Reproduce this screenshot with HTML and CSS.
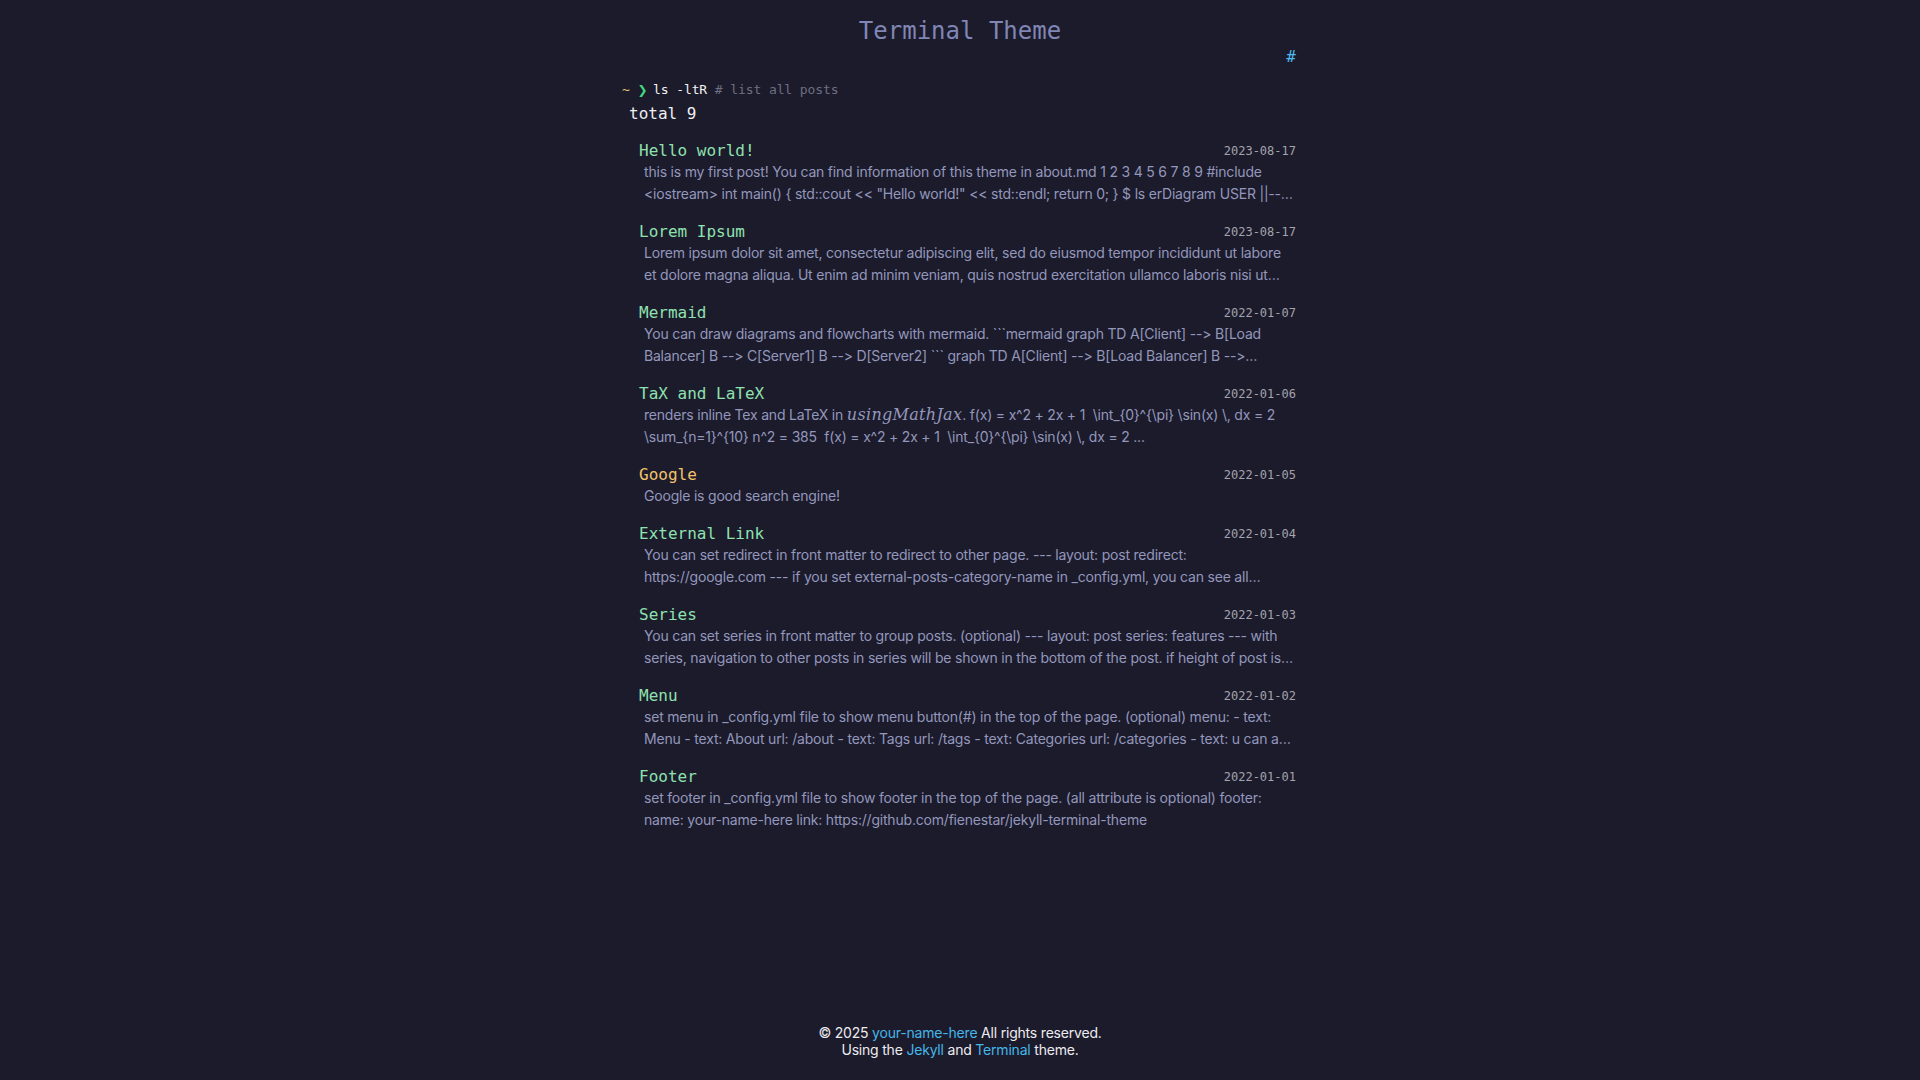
FILE: index.html
```html
<!DOCTYPE html>
<html lang="en">
<head>
<meta charset="utf-8">
<title>Terminal Theme</title>
<link rel="stylesheet" href="styles.css">
</head>
<body>
<div class="page">
  <header class="site-header">
    <h1 class="site-title">Terminal Theme</h1>
    <nav class="menu"><a class="menu-btn" href="#">#</a></nav>
  </header>
  <main class="content">
    <div class="prompt"><span class="p-home">~</span> <span class="p-arrow">❯</span> <span class="p-cmd">ls -ltR</span> <span class="p-comment"># list all posts</span></div>
    <div class="total">total 9</div>
    <ul class="posts">
      <li class="post">
        <div class="post-head"><a class="post-title" href="#">Hello world!</a><span class="post-date">2023-08-17</span></div>
        <p class="post-summary">this is my first post! You can find information of this theme in about.md 1 2 3 4 5 6 7 8 9 #include &lt;iostream&gt; int main() { std::cout &lt;&lt; "Hello world!" &lt;&lt; std::endl; return 0; } $ ls erDiagram USER ||--o{ ORDER : places ORDER ||--|{ LINE-ITEM : contains</p>
      </li>
      <li class="post">
        <div class="post-head"><a class="post-title" href="#">Lorem Ipsum</a><span class="post-date">2023-08-17</span></div>
        <p class="post-summary">Lorem ipsum dolor sit amet, consectetur adipiscing elit, sed do eiusmod tempor incididunt ut labore et dolore magna aliqua. Ut enim ad minim veniam, quis nostrud exercitation ullamco laboris nisi ut aliquip ex ea commodo consequat.</p>
      </li>
      <li class="post">
        <div class="post-head"><a class="post-title" href="#">Mermaid</a><span class="post-date">2022-01-07</span></div>
        <p class="post-summary">You can draw diagrams and flowcharts with mermaid. ```mermaid graph TD A[Client] --&gt; B[Load Balancer] B --&gt; C[Server1] B --&gt; D[Server2] ``` graph TD A[Client] --&gt; B[Load Balancer] B --&gt; C[Server1] B --&gt; D[Server2]</p>
      </li>
      <li class="post">
        <div class="post-head"><a class="post-title" href="#">TaX and LaTeX</a><span class="post-date">2022-01-06</span></div>
        <p class="post-summary">renders inline Tex and LaTeX in <span class="math">usingMathJax</span>. f(x) = x^2 + 2x + 1 &nbsp;\int_{0}^{\pi} \sin(x) \, dx = 2 \sum_{n=1}^{10} n^2 = 385 &nbsp;f(x) = x^2 + 2x + 1 &nbsp;\int_{0}^{\pi} \sin(x) \, dx = 2 ...</p>
      </li>
      <li class="post">
        <div class="post-head"><a class="post-title external" href="#">Google</a><span class="post-date">2022-01-05</span></div>
        <p class="post-summary">Google is good search engine!</p>
      </li>
      <li class="post">
        <div class="post-head"><a class="post-title" href="#">External Link</a><span class="post-date">2022-01-04</span></div>
        <p class="post-summary">You can set redirect in front matter to redirect to other page. --- layout: post redirect: https://google.com --- if you set external-posts-category-name in _config.yml, you can see all external posts in category page.</p>
      </li>
      <li class="post">
        <div class="post-head"><a class="post-title" href="#">Series</a><span class="post-date">2022-01-03</span></div>
        <p class="post-summary">You can set series in front matter to group posts. (optional) --- layout: post series: features --- with series, navigation to other posts in series will be shown in the bottom of the post. if height of post is long enough.</p>
      </li>
      <li class="post">
        <div class="post-head"><a class="post-title" href="#">Menu</a><span class="post-date">2022-01-02</span></div>
        <p class="post-summary">set menu in _config.yml file to show menu button(#) in the top of the page. (optional) menu: - text: Menu - text: About url: /about - text: Tags url: /tags - text: Categories url: /categories - text: u can add more</p>
      </li>
      <li class="post">
        <div class="post-head"><a class="post-title" href="#">Footer</a><span class="post-date">2022-01-01</span></div>
        <p class="post-summary">set footer in _config.yml file to show footer in the top of the page. (all attribute is optional) footer: name: your-name-here link: https://github.com/fienestar/jekyll-terminal-theme</p>
      </li>
    </ul>
  </main>
  <footer class="site-footer">
    <div>© 2025 <a href="#">your-name-here</a> All rights reserved.</div>
    <div>Using the <a href="#">Jekyll</a> and <a href="#">Terminal</a> theme.</div>
  </footer>
</div>
</body>
</html>
```

FILE: styles.css
```css
html, body {
  margin: 0;
  padding: 0;
  background: #1c1b2b;
}

body {
  font-family: "DejaVu Sans Mono", "Liberation Mono", monospace;
  color: #e4e4ea;
}

a {
  text-decoration: none;
}

.page {
  min-height: 100vh;
  display: flex;
  flex-direction: column;
}

.site-header {
  width: 672px;
  margin: 0 auto;
  padding-top: 13px;
}

.site-title {
  margin: 0;
  font-size: 24px;
  line-height: 36px;
  font-weight: normal;
  text-align: center;
  color: #8086b5;
}

.menu {
  display: flex;
  justify-content: flex-end;
}

.menu-btn {
  font-size: 16px;
  line-height: 15px;
  color: #4db8ec;
}

.content {
  flex: 1;
  width: 672px;
  margin: 0 auto;
  padding-top: 16px;
}

.prompt {
  font-size: 13px;
  letter-spacing: -0.1px;
  line-height: 20px;
  white-space: pre;
  margin-left: -2px;
}

.p-home {
  color: #e8c477;
}

.p-arrow {
  display: inline-block;
  width: 7.8px;
  font-family: "DejaVu Sans", sans-serif;
  font-size: 12px;
  font-weight: bold;
  color: #3fd97f;
}

.p-cmd {
  color: #f2f2f2;
}

.p-comment {
  color: #6e6e82;
}

.total {
  font-size: 16px;
  line-height: 24px;
  margin-top: 2px;
  padding-left: 5px;
  color: #eeeef2;
}

.posts {
  list-style: none;
  margin: 15px 0 0;
  padding: 0 0 0 15px;
}

.post {
  margin-bottom: 17px;
}

.post-head {
  display: flex;
  justify-content: space-between;
  align-items: center;
  height: 20px;
}

.post-title {
  font-size: 16px;
  line-height: 20px;
  color: #8ee2b0;
}

.post-title.external {
  color: #f4c26d;
}

.post-date {
  font-size: 12px;
  line-height: 20px;
  color: #a3a3ad;
}

.post-summary {
  margin: 0;
  padding-left: 5px;
  font-family: "Inter", "Noto Sans", sans-serif;
  font-size: 14px;
  letter-spacing: -0.2px;
  font-variant-ligatures: none;
  font-feature-settings: "calt" 0, "liga" 0;
  line-height: 22px;
  color: #9397bc;
  display: -webkit-box;
  -webkit-line-clamp: 2;
  -webkit-box-orient: vertical;
  overflow: hidden;
}

.math {
  font-family: "DejaVu Serif", "Liberation Serif", serif;
  font-style: italic;
  font-size: 16px;
  letter-spacing: 0.3px;
}

.site-footer {
  text-align: center;
  font-family: "Inter", "Noto Sans", sans-serif;
  font-size: 14px;
  letter-spacing: -0.2px;
  line-height: 17px;
  color: #ececf0;
  padding: 0 0 22px;
}

.site-footer a {
  color: #45b6ea;
}
```
